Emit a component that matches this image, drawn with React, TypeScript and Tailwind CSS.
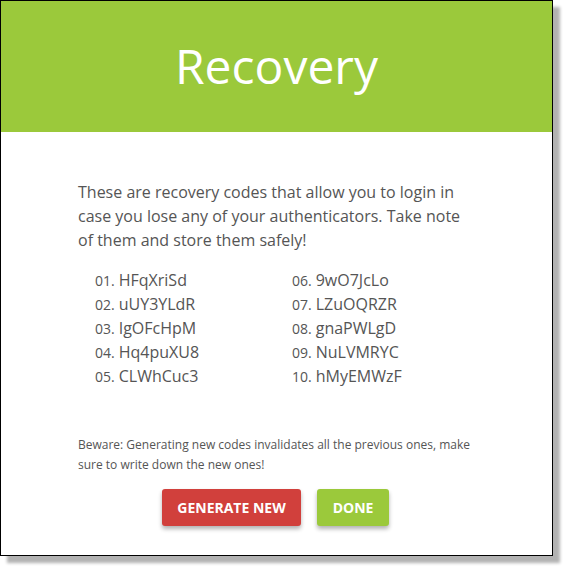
const codes = [
  "HFqXriSd",
  "uUY3YLdR",
  "IgOFcHpM",
  "Hq4puXU8",
  "CLWhCuc3",
  "9wO7JcLo",
  "LZuOQRZR",
  "gnaPWLgD",
  "NuLVMRYC",
  "hMyEMWzF",
]

export default function App() {
  const left = codes.slice(0, 5)
  const right = codes.slice(5)

  return (
    <div className="w-[563px] h-[567px] bg-white font-['Open_Sans',sans-serif]">
      <div className="w-[553px] h-[556px] border border-black bg-white shadow-[7px_7px_3px_rgba(0,0,0,0.3)] flex flex-col">
        <div className="h-[131px] bg-[#9bc93b] flex items-center justify-center">
          <h1 className="text-[48px] leading-none text-white font-normal pb-[2px]">Recovery</h1>
        </div>
        <div className="flex flex-col pl-[77px] pr-6">
          <p className="mt-[48px] text-[16px] leading-[24px] text-[#555555] max-w-[400px]">
            These are recovery codes that allow you to login in case you lose any of your authenticators. Take note
            of them and store them safely!
          </p>
          <div className="mt-[16px] pl-[17px] grid grid-cols-[197px_197px]">
            {[left, right].map((col, c) => (
              <div key={c} className="flex flex-col">
                {col.map((code, i) => (
                  <div key={code} className="h-[24px] flex items-baseline text-[#555555]">
                    <span className="text-[14px] mr-1">{String(c * 5 + i + 1).padStart(2, "0")}.</span>
                    <span className="text-[16px]">{code}</span>
                  </div>
                ))}
              </div>
            ))}
          </div>
          <p className="mt-[47px] text-[12px] leading-[20px] text-[#555555] max-w-[400px]">
            Beware: Generating new codes invalidates all the previous ones, make sure to write down the new ones!
          </p>
        </div>
        <div className="mt-[14px] flex justify-center gap-4 pr-[2px]">
          <button className="h-[37px] w-[139px] rounded-[3px] bg-[#d1403c] text-white text-[14px] font-bold shadow-[0_3px_4px_rgba(0,0,0,0.3)]">
            GENERATE NEW
          </button>
          <button className="h-[37px] w-[72px] rounded-[3px] bg-[#9bc93b] text-white text-[14px] font-bold shadow-[0_3px_4px_rgba(0,0,0,0.3)]">
            DONE
          </button>
        </div>
      </div>
    </div>
  )
}
